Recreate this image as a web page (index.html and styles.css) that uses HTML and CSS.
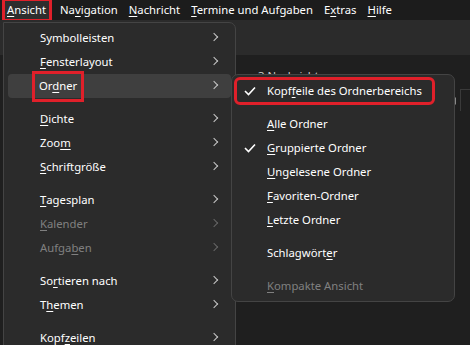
FILE: index.html
```html
<!DOCTYPE html>
<html lang="de">
<head>
    <meta charset="UTF-8">
    <title>Ansicht – Ordner</title>
    <link rel="stylesheet" href="styles.css">
</head>
<body>
    <div class="app">
        <div class="menubar">
            <span class="top-item open"><u>A</u>nsicht</span>
            <span class="top-item">Na<u>v</u>igation</span>
            <span class="top-item"><u>N</u>achricht</span>
            <span class="top-item"><u>T</u>ermine und Aufgaben</span>
            <span class="top-item">E<u>x</u>tras</span>
            <span class="top-item"><u>H</u>ilfe</span>
        </div>
        <div class="toolbar"></div>
        <div class="content">
            <div class="list-title">3 Nachrichten</div>
            <div class="list-head">
                <span class="head-icon"></span>
                <span class="head-line"></span>
            </div>
            <div class="dot"></div>
            <div class="dot"></div>
        </div>
    </div>

    <div class="menu menu-main">
        <div class="item">Symbolleisten<i class="chev"></i></div>
        <div class="item"><u>F</u>ensterlayout<i class="chev"></i></div>
        <div class="item active"><span class="mark">Or<u>d</u>ner</span><i class="chev"></i></div>
        <div class="sep"></div>
        <div class="item"><u>D</u>ichte<i class="chev"></i></div>
        <div class="item">Zoo<u>m</u><i class="chev"></i></div>
        <div class="item"><u>S</u>chriftgröße<i class="chev"></i></div>
        <div class="sep"></div>
        <div class="item"><u>T</u>agesplan<i class="chev"></i></div>
        <div class="item disabled"><u>K</u>alender<i class="chev"></i></div>
        <div class="item disabled">Aufga<u>b</u>en<i class="chev"></i></div>
        <div class="sep"></div>
        <div class="item">So<u>r</u>tieren nach<i class="chev"></i></div>
        <div class="item">T<u>h</u>emen<i class="chev"></i></div>
        <div class="sep"></div>
        <div class="item">Kopf<u>z</u>eilen<i class="chev"></i></div>
    </div>

    <div class="menu menu-sub">
        <div class="item checked marked">
            <svg class="check" width="12" height="10" viewBox="0 0 12 10"><polyline points="1,5 4.5,8.5 11,1.5" fill="none" stroke="#ffffff" stroke-width="1.6"/></svg>
            Kopf<u>f</u>eile des Ordnerbereichs
        </div>
        <div class="sep"></div>
        <div class="item"><u>A</u>lle Ordner</div>
        <div class="item checked">
            <svg class="check" width="12" height="10" viewBox="0 0 12 10"><polyline points="1,5 4.5,8.5 11,1.5" fill="none" stroke="#ffffff" stroke-width="1.6"/></svg>
            <u>G</u>ruppierte Ordner
        </div>
        <div class="item"><u>U</u>ngelesene Ordner</div>
        <div class="item"><u>F</u>avoriten-Ordner</div>
        <div class="item"><u>L</u>etzte Ordner</div>
        <div class="sep"></div>
        <div class="item">Schlagwört<u>e</u>r</div>
        <div class="sep"></div>
        <div class="item disabled"><u>K</u>ompakte Ansicht</div>
    </div>
</body>
</html>
```

FILE: styles.css
```css
* {
    box-sizing: border-box;
}

body {
    margin: 0;
    width: 470px;
    height: 345px;
    overflow: hidden;
    position: relative;
    background: #1c1c1c;
    font-family: 'Noto Sans', sans-serif;
    font-size: 11.3px;
    color: #ffffff;
}

u {
    text-decoration-thickness: 1px;
    text-underline-offset: 2px;
}

.app {
    display: flex;
    flex-direction: column;
    height: 100%;
}

.menubar {
    height: 20px;
    display: flex;
    align-items: center;
    padding-left: 4px;
    background: #1c1c1c;
    line-height: 20px;
}

.top-item {
    padding: 0 3px;
    margin-right: 5px;
}

.top-item.open {
    background: #2e2e2e;
    outline: 3px solid #e0202a;
    outline-offset: -1px;
    margin-right: 7px;
    padding-right: 4px;
}

.toolbar {
    height: 35px;
    background: #2b2b2b;
}

.content {
    flex: 1;
    background: #1f1f1f;
    padding: 13px 0 0 258px;
}

.list-title {
    color: #cfcfcf;
}

.list-head {
    margin-top: 6px;
    height: 22px;
    display: flex;
    justify-content: flex-end;
    align-items: flex-start;
}

.head-icon {
    width: 10px;
    height: 8px;
    margin-top: 8px;
    margin-right: 4px;
    border: 1px solid #8a8a8a;
    border-radius: 1px;
}

.head-line {
    width: 10px;
    height: 22px;
    border-top: 1px solid #3a3a3a;
    border-left: 1px solid #3a3a3a;
}

.dot {
    width: 8px;
    height: 8px;
    border: 1px solid #555;
    border-radius: 50%;
    margin: 6px 0 12px 186px;
}

.menu {
    position: absolute;
    background: #2b2b2b;
    border: 1px solid #444;
    border-radius: 7px;
    padding: 3px 4px;
}

.menu-main {
    left: 3px;
    top: 22px;
    width: 233px;
    height: 340px;
    border-top-left-radius: 0;
}

.menu-sub {
    left: 231px;
    top: 74px;
    width: 224px;
    padding-top: 4px;
}

.item {
    height: 24px;
    line-height: 24px;
    display: flex;
    align-items: center;
    position: relative;
    padding-left: 32px;
    border-radius: 4px;
    white-space: nowrap;
}

.menu-sub .item {
    padding-left: 31px;
}

.item.active {
    background: #3f3f3f;
}

.item.disabled {
    color: #808080;
}

.sep {
    height: 9px;
}

.chev {
    position: absolute;
    right: 14px;
    top: 8px;
    width: 6px;
    height: 6px;
    border-top: 1px solid #c8c8c8;
    border-right: 1px solid #c8c8c8;
    transform: rotate(45deg);
}

.disabled .chev {
    border-color: #666;
}

.mark {
    outline: 3px solid #e0202a;
    outline-offset: 0;
    padding: 1px 4px 2px 4px;
    margin-left: -5px;
    line-height: 22px;
}

.check {
    position: absolute;
    left: 8px;
    top: 7px;
}

.marked {
    outline: 3px solid #e0202a;
    outline-offset: -1px;
    margin-right: 17px;
}
```
